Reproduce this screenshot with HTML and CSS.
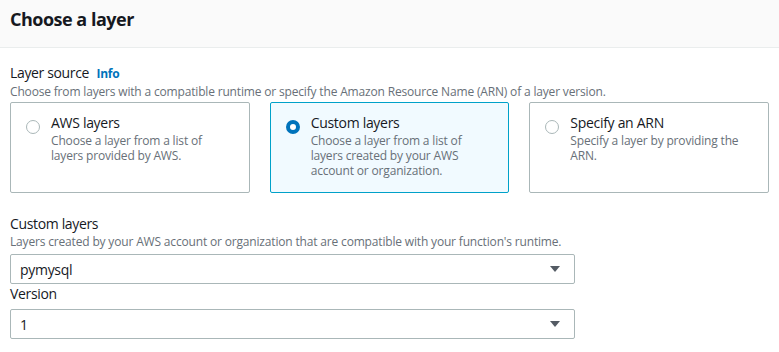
FILE: index.html
```html
<!DOCTYPE html>
<html lang="en">
<head>
  <meta charset="UTF-8">
  <title>Choose a layer</title>
  <meta name="viewport" content="width=device-width,initial-scale=1">
  <link rel="stylesheet" href="styles.css">
</head>
<body>

<div class="panel">
  <div class="panel-header">
    <h2>Choose a layer</h2>
  </div>

  <div class="panel-body">
    <div class="field">
      <div class="field-label">Layer source <a class="info" href="#">Info</a></div>
      <div class="field-desc">Choose from layers with a compatible runtime or specify the Amazon Resource Name (ARN) of a layer version.</div>

      <div class="tiles">
        <label class="tile">
          <span class="radio"></span>
          <span class="tile-text">
            <span class="tile-title">AWS layers</span>
            <span class="tile-desc">Choose a layer from a list of layers provided by AWS.</span>
          </span>
        </label>
        <label class="tile selected">
          <span class="radio checked"></span>
          <span class="tile-text">
            <span class="tile-title">Custom layers</span>
            <span class="tile-desc">Choose a layer from a list of layers created by your AWS account or organization.</span>
          </span>
        </label>
        <label class="tile">
          <span class="radio"></span>
          <span class="tile-text">
            <span class="tile-title">Specify an ARN</span>
            <span class="tile-desc">Specify a layer by providing the ARN.</span>
          </span>
        </label>
      </div>
    </div>

    <div class="field field-layers">
      <div class="field-label">Custom layers</div>
      <div class="field-desc">Layers created by your AWS account or organization that are compatible with your function's runtime.</div>
      <div class="select">
        <span>pymysql</span>
        <span class="caret"></span>
      </div>
    </div>

    <div class="field">
      <div class="field-label">Version</div>
      <div class="select select-version">
        <span>1</span>
        <span class="caret"></span>
      </div>
    </div>
  </div>
</div>

</body>
</html>
```

FILE: styles.css
```css
body {
  margin: 0;
  background: #fff;
  color: #16191f;
  font-family: "Open Sans", "Noto Sans", sans-serif;
}
.panel-header {
  height: 48px;
  box-sizing: border-box;
  padding: 7px 10px 0;
  background: #fafafa;
  border-bottom: 1px solid #eaeded;
}
.panel-header h2 {
  margin: 0;
  font-size: 18px;
  line-height: 24px;
  font-weight: 700;
  letter-spacing: -0.5px;
}
.panel-body {
  padding: 15px 10px 0;
}
.field-label {
  font-size: 14px;
  line-height: 20px;
  letter-spacing: -0.35px;
}
.info {
  margin-left: 4px;
  color: #0073bb;
  font-size: 12px;
  font-weight: 700;
  letter-spacing: -0.2px;
  text-decoration: none;
}
.field-desc {
  font-size: 12px;
  line-height: 16px;
  color: #687078;
  letter-spacing: -0.17px;
}
.tiles {
  display: grid;
  grid-template-columns: repeat(3, 1fr);
  gap: 20px;
  margin-top: 2px;
}
.tile {
  display: flex;
  gap: 11px;
  height: 91px;
  box-sizing: border-box;
  padding: 10px 14px 0 15px;
  border: 1px solid #aab7b8;
  border-radius: 2px;
  cursor: pointer;
}
.tile.selected {
  background: #f1faff;
  border-color: #00a1c9;
}
.radio {
  flex: none;
  width: 12px;
  height: 12px;
  margin-top: 7px;
  border: 1px solid #aab7b8;
  border-radius: 50%;
  background: #fff;
}
.radio.checked {
  width: 6px;
  height: 6px;
  border: 4px solid #0073bb;
}
.tile-text {
  display: flex;
  flex-direction: column;
}
.tile-title {
  font-size: 14px;
  line-height: 20px;
  letter-spacing: -0.3px;
}
.tile-desc {
  font-size: 12px;
  line-height: 15px;
  color: #687078;
  letter-spacing: -0.17px;
}
.field-layers {
  margin-top: 21px;
}
.select {
  display: flex;
  align-items: center;
  justify-content: space-between;
  width: 565px;
  height: 30px;
  box-sizing: border-box;
  margin-top: 4px;
  padding: 0 14px 0 9px;
  border: 1px solid #aab7b8;
  border-radius: 2px;
  font-size: 14px;
  letter-spacing: -0.3px;
}
.select-version {
  margin-top: 5px;
}
.caret {
  width: 0;
  height: 0;
  border-left: 5px solid transparent;
  border-right: 5px solid transparent;
  border-top: 6px solid #545b64;
}
```
